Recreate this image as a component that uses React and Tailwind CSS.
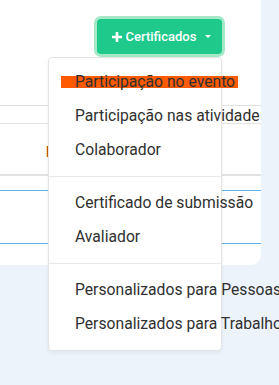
import React from "react";

const groups = [
  ["Participação no evento", "Participação nas atividade", "Colaborador"],
  ["Certificado de submissão", "Avaliador"],
  ["Personalizados para Pessoas", "Personalizados para Trabalhos"],
];

function MenuItem({ label, marked }) {
  return (
    <div className="relative h-[34px] flex items-center pl-[26px] whitespace-nowrap">
      {marked && (
        <span className="absolute left-[12px] top-[11px] h-[12px] w-[177px] bg-[#ff5a00]" />
      )}
      <span className="relative">{label}</span>
    </div>
  );
}

export default function App() {
  return (
    <div
      className="relative w-[279px] h-[385px] overflow-hidden bg-[#edf3fb] text-[#303030]"
      style={{ fontFamily: "Roboto, 'Liberation Sans', sans-serif" }}
    >
      {/* Card */}
      <div className="w-[261px] h-[265px] bg-white rounded-br-[10px]">
        <div className="flex justify-end pt-[19px] pr-[39px]">
          <button className="h-[35px] w-[125px] rounded-[4px] bg-[#1fc98c] shadow-[0_0_0_3px_#a5e8c8] flex items-center justify-center gap-[3px] pl-[3px] text-white text-[13px] font-medium">
            <svg width="12" height="12" viewBox="0 0 12 12">
              <path d="M6 1v10M1 6h10" stroke="white" strokeWidth="2.6" />
            </svg>
            <span>Certificados</span>
            <span className="ml-[6px] w-0 h-0 border-x-[3px] border-x-transparent border-t-[3px] border-t-white" />
          </button>
        </div>

        {/* Table behind the menu */}
        <div className="mt-[51px]">
          <div className="h-[18px] border-t border-[#e2e2e2]" />
          <div className="h-[53px] border-t border-b-2 border-[#e2e2e2] pl-[46px] pt-[16px]">
            <span className="text-[14px] font-bold text-[#b35a00]">E</span>
          </div>
          <div className="h-[14px]" />
          <div className="h-[54px] border-y border-[#5fb0ea]" />
        </div>
      </div>

      {/* Dropdown menu */}
      <div className="absolute left-[48px] top-[57px] w-[174px] h-[294px] bg-white border border-[#e3e3e3] rounded-[4px] shadow-[0_2px_4px_rgba(0,0,0,0.06)] pt-[7px] text-[15.7px]">
        {groups.map((items, gi) => (
          <div key={gi}>
            {gi > 0 && <div className="my-[9px] border-t border-[#e8e8e8]" />}
            {items.map((label, i) => (
              <MenuItem key={label} label={label} marked={gi === 0 && i === 0} />
            ))}
          </div>
        ))}
      </div>
    </div>
  );
}
